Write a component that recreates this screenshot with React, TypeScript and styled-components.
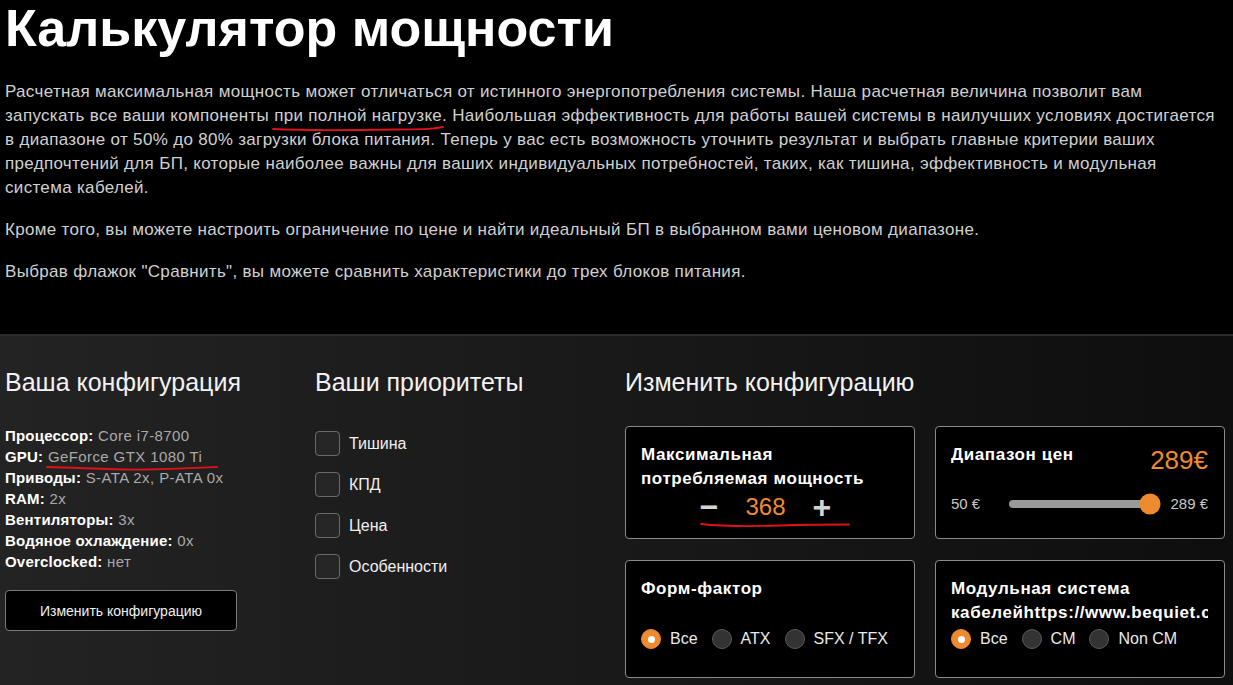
import React from "react";
import styled, { createGlobalStyle } from "styled-components";

const orange = "#ee8a2f";

const GlobalStyle = createGlobalStyle`
  html, body {
    margin: 0;
    padding: 0;
    background: #000;
  }
  body {
    font-family: "Liberation Sans", Arial, sans-serif;
    color: #d6d6d6;
  }
`;

const Page = styled.div`
  display: flex;
  flex-direction: column;
  min-height: 100vh;
`;

const Intro = styled.section`
  background: #000;
  padding: 0 12px 50px 5px;
`;

const Title = styled.h1`
  margin: 0;
  font-size: 52px;
  line-height: 56px;
  font-weight: 700;
  color: #fff;
`;

const Paragraph = styled.p`
  margin: 24px 0 0;
  font-size: 17px;
  letter-spacing: 0.32px;
  line-height: 24px;
  color: #d0d0d0;
  & + & {
    margin-top: 18px;
  }
`;

const Marked = styled.span`
  position: relative;
  display: inline-block;
`;

const Scribble = styled.svg<{ $left?: number; $bottom?: number }>`
  position: absolute;
  left: ${(p) => p.$left ?? -2}px;
  bottom: ${(p) => p.$bottom ?? -4}px;
  overflow: visible;
  pointer-events: none;
`;

const Settings = styled.section`
  flex: 1;
  border-top: 2px solid #2c2c2c;
  background: linear-gradient(90deg, #232323 0%, #1b1b1b 40%, #0e0e0e 100%);
  display: grid;
  grid-template-columns: 310px 310px 1fr;
  padding: 28px 10px 30px 5px;
`;

const Column = styled.div`
  display: flex;
  flex-direction: column;
`;

const Heading = styled.h2`
  margin: 0 0 38px;
  font-size: 25px;
  line-height: 36px;
  font-weight: 400;
  color: #f2f2f2;
`;

const SpecList = styled.ul`
  list-style: none;
  margin: -13px 0 0;
  padding: 0;
  font-size: 15px;
  letter-spacing: 0.4px;
  line-height: 21px;
`;

const Spec = styled.li`
  color: #a9a9a9;
  b {
    color: #fff;
    font-weight: 700;
    letter-spacing: 0.2px;
  }
`;

const OutlineButton = styled.button`
  margin-top: 18px;
  width: 232px;
  height: 41px;
  background: #000;
  border: 1px solid #7a7a7a;
  border-radius: 4px;
  color: #f0f0f0;
  font-family: "Liberation Sans", Arial, sans-serif;
  font-size: 14px;
  cursor: pointer;
`;

const Priorities = styled.div`
  display: flex;
  flex-direction: column;
  gap: 16px;
  margin-top: -7px;
`;

const CheckRow = styled.label`
  display: flex;
  align-items: center;
  gap: 9px;
  font-size: 16px;
  color: #f0f0f0;
`;

const Box = styled.span`
  width: 23px;
  height: 23px;
  border: 1px solid #6a6a6a;
  border-radius: 4px;
  background: #262626;
`;

const Cards = styled.div`
  display: grid;
  grid-template-columns: 290px 290px;
  column-gap: 20px;
  row-gap: 21px;
  margin-top: -12px;
`;

const Card = styled.div<{ $tall?: boolean }>`
  background: #000;
  border: 1px solid #8a8a8a;
  border-radius: 4px;
  padding: 16px 16px 0 15px;
  height: ${(p) => (p.$tall ? "118px" : "113px")};
  box-sizing: border-box;
  display: flex;
  flex-direction: column;
  min-width: 0;
`;

const CardTitle = styled.div<{ $lines?: number }>`
  font-size: 17px;
  letter-spacing: 0.6px;
  line-height: 24px;
  font-weight: 700;
  color: #fff;
  overflow: hidden;
  min-height: ${(p) => (p.$lines ?? 1) * 24}px;
`;

const Stepper = styled.div`
  position: relative;
  align-self: center;
  display: flex;
  align-items: center;
  gap: 27px;
  margin: 2px 8px 0 0;
`;

const StepSign = styled.span`
  font-size: 32px;
  line-height: 28px;
  font-weight: 700;
  color: #d4d4d4;
`;

const StepValue = styled.span`
  font-size: 24px;
  line-height: 28px;
  color: ${orange};
`;

const PriceHead = styled.div`
  display: flex;
  justify-content: space-between;
  align-items: flex-start;
`;

const PriceValue = styled.span`
  font-size: 26px;
  line-height: 30px;
  color: ${orange};
  margin-top: 2px;
`;

const SliderRow = styled.div`
  display: flex;
  align-items: center;
  margin-top: 20px;
  font-size: 15px;
  color: #c8c8c8;
`;

const SliderEdge = styled.span<{ $right?: boolean }>`
  width: ${(p) => (p.$right ? "48px" : "58px")};
  text-align: ${(p) => (p.$right ? "right" : "left")};
`;

const Track = styled.div`
  position: relative;
  flex: 1;
  height: 8px;
  border-radius: 4px;
  background: #9a9a9a;
  margin-right: 10px;
`;

const Thumb = styled.span`
  position: absolute;
  top: 50%;
  width: 21px;
  height: 21px;
  border-radius: 50%;
  background: ${orange};
  transform: translate(-50%, -50%);
`;

const RadioGroup = styled.div`
  display: flex;
  align-items: center;
  gap: 14px;
  margin-top: 4px;
`;

const RadioItem = styled.label`
  display: flex;
  align-items: center;
  gap: 9px;
  font-size: 16px;
  color: #eaeaea;
`;

const Dot = styled.span<{ $on?: boolean }>`
  width: 20px;
  height: 20px;
  border-radius: 50%;
  box-sizing: border-box;
  background: ${(p) => (p.$on ? orange : "#333")};
  border: 1px solid ${(p) => (p.$on ? orange : "#5a5a5a")};
  display: flex;
  align-items: center;
  justify-content: center;
  &::after {
    content: "";
    display: ${(p) => (p.$on ? "block" : "none")};
    width: 7px;
    height: 7px;
    border-radius: 50%;
    background: #fff;
  }
`;

const Underline = ({
  width,
  d,
  left,
  bottom,
}: {
  width: number;
  d: string;
  left?: number;
  bottom?: number;
}) => (
  <Scribble width={width} height={6} viewBox={`0 0 ${width} 6`} $left={left} $bottom={bottom}>
    <path d={d} fill="none" stroke="#e0121b" strokeWidth={1.8} strokeLinecap="round" />
  </Scribble>
);

const Radios = ({ items }: { items: string[] }) => (
  <RadioGroup>
    {items.map((label, i) => (
      <RadioItem key={label}>
        <Dot $on={i === 0} />
        {label}
      </RadioItem>
    ))}
  </RadioGroup>
);

const specs: [string, string][] = [
  ["Процессор:", "Core i7-8700"],
  ["GPU:", "GeForce GTX 1080 Ti"],
  ["Приводы:", "S-ATA 2x, P-ATA 0x"],
  ["RAM:", "2x"],
  ["Вентиляторы:", "3x"],
  ["Водяное охлаждение:", "0x"],
  ["Overclocked:", "нет"],
];

const priorities = ["Тишина", "КПД", "Цена", "Особенности"];

export default function App() {
  const min = 50;
  const max = 289;
  const price = 289;
  const pos = ((price - min) / (max - min)) * 100;

  return (
    <Page>
      <GlobalStyle />
      <Intro>
        <Title>Калькулятор мощности</Title>
        <Paragraph>
          Расчетная максимальная мощность может отличаться от истинного энергопотребления системы. Наша
          расчетная величина позволит вам запускать все ваши компоненты{" "}
          <Marked>
            при полной нагрузке
            <Underline width={172} d="M1 3 C 40 5, 80 4, 120 3.5 S 160 3, 171 1" />
          </Marked>
          . Наибольшая эффективность для работы вашей системы в наилучших условиях достигается в
          диапазоне от 50% до 80% загрузки блока питания. Теперь у вас есть возможность уточнить
          результат и выбрать главные критерии ваших предпочтений для БП, которые наиболее важны для
          ваших индивидуальных потребностей, таких, как тишина, эффективность и модульная система
          кабелей.
        </Paragraph>
        <Paragraph>
          Кроме того, вы можете настроить ограничение по цене и найти идеальный БП в выбранном вами
          ценовом диапазоне.
        </Paragraph>
        <Paragraph>
          Выбрав флажок "Сравнить", вы можете сравнить характеристики до трех блоков питания.
        </Paragraph>
      </Intro>

      <Settings>
        <Column>
          <Heading>Ваша конфигурация</Heading>
          <SpecList>
            {specs.map(([k, v]) => (
              <Spec key={k}>
                <b>{k}</b>{" "}
                {k === "GPU:" ? (
                  <Marked>
                    {v}
                    <Underline width={172} d="M1 2 C 40 3, 70 5, 100 4.5 S 150 3, 171 2" />
                  </Marked>
                ) : (
                  v
                )}
              </Spec>
            ))}
          </SpecList>
          <OutlineButton>Изменить конфигурацию</OutlineButton>
        </Column>

        <Column>
          <Heading>Ваши приоритеты</Heading>
          <Priorities>
            {priorities.map((p) => (
              <CheckRow key={p}>
                <Box />
                {p}
              </CheckRow>
            ))}
          </Priorities>
        </Column>

        <Column>
          <Heading>Изменить конфигурацию</Heading>
          <Cards>
            <Card>
              <CardTitle $lines={2}>Максимальная потребляемая мощность</CardTitle>
              <Stepper>
                <StepSign>−</StepSign>
                <StepValue>368</StepValue>
                <StepSign>+</StepSign>
                <Underline
                  width={150}
                  left={0}
                  bottom={-8}
                  d="M1 1 C 20 3, 50 3.5, 80 2.5 S 130 1.5, 149 1.5"
                />
              </Stepper>
            </Card>
            <Card>
              <PriceHead>
                <CardTitle>Диапазон цен</CardTitle>
                <PriceValue>{price}€</PriceValue>
              </PriceHead>
              <SliderRow>
                <SliderEdge>{min} €</SliderEdge>
                <Track>
                  <Thumb style={{ left: `${pos}%` }} />
                </Track>
                <SliderEdge $right>{max} €</SliderEdge>
              </SliderRow>
            </Card>
            <Card $tall>
              <CardTitle $lines={2}>Форм-фактор</CardTitle>
              <Radios items={["Все", "ATX", "SFX / TFX"]} />
            </Card>
            <Card $tall>
              <CardTitle $lines={2}>Модульная система кабелейhttps://www.bequiet.com</CardTitle>
              <Radios items={["Все", "CM", "Non CM"]} />
            </Card>
          </Cards>
        </Column>
      </Settings>
    </Page>
  );
}
